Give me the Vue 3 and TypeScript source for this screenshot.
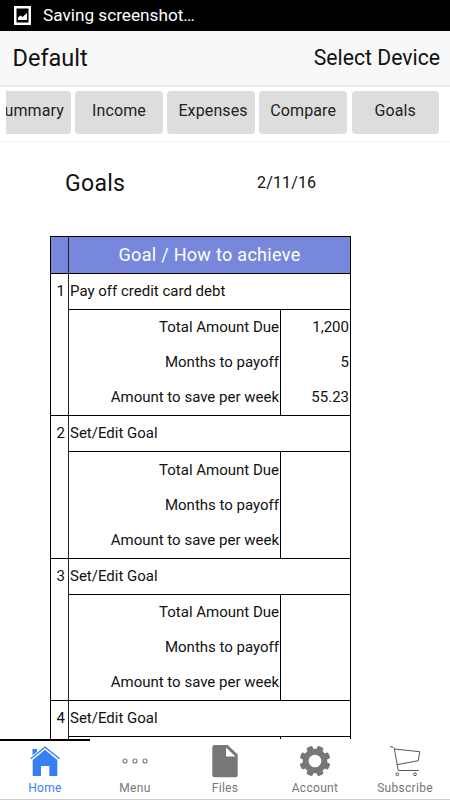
<script setup lang="ts">
interface Goal {
  title: string
  rows: { label: string; value: string }[]
}

const sections: string[] = ['Summary', 'Income', 'Expenses', 'Compare', 'Goals']

const detailRows = (total = '', months = '', weekly = '') => [
  { label: 'Total Amount Due', value: total },
  { label: 'Months to payoff', value: months },
  { label: 'Amount to save per week', value: weekly },
]

const goals: Goal[] = [
  { title: 'Pay off credit card debt', rows: detailRows('1,200', '5', '55.23') },
  { title: 'Set/Edit Goal', rows: detailRows() },
  { title: 'Set/Edit Goal', rows: detailRows() },
  { title: 'Set/Edit Goal', rows: [] },
]
</script>

<template>
  <div class="screen">
    <div class="status">
      <svg class="status-icon" viewBox="0 0 17 19" width="17" height="19">
        <path d="M1.25 1.25h14.5v16.5H1.25z" fill="none" stroke="#fff" stroke-width="2.5" />
        <path d="M4 14v-2.500l2.500-2 2 1.500L13 7v7z" fill="#fff" />
      </svg>
      <span class="status-text">Saving screenshot…</span>
    </div>
    <header class="header">
      <span class="name">Default</span>
      <span class="device">Select Device</span>
    </header>
    <div class="sections">
      <button v-for="s in sections" :key="s" class="section" type="button">{{ s }}</button>
    </div>
    <main class="content">
      <div class="heading">
        <h1>Goals</h1>
        <span class="date">2/11/16</span>
      </div>
      <div class="sheet">
        <div class="sheet-head">
          <span class="num"></span>
          <span class="head-label"><b>Goal / How to achieve</b></span>
        </div>
        <div v-for="(g, i) in goals" :key="i" class="goal">
          <div class="num">{{ i + 1 }}</div>
          <div class="body">
            <div class="title"><span>{{ g.title }}</span></div>
            <div class="details">
              <div class="labels">
                <span v-for="r in g.rows" :key="r.label">{{ r.label }}</span>
              </div>
              <div class="values">
                <span v-for="r in g.rows" :key="r.label">{{ r.value }}</span>
              </div>
            </div>
          </div>
        </div>
      </div>
    </main>
    <nav class="tabs">
      <div class="tab active">
        <svg viewBox="0 0 36 36" width="36" height="36">
          <path d="M5.500 6H10v3.500l-4.500 4z" fill="#387ef5" />
          <path d="M5.700 17 18 6.800 30.300 17v16H22.300V23H14v10H5.700z" fill="#387ef5" />
          <path d="M3.700 15.700 18 4.200l14.700 11.500" fill="none" stroke="#fff" stroke-width="3" />
          <path d="M3.700 15.700 18 4.200l14.700 11.500" fill="none" stroke="#387ef5" stroke-width="1.300" />
        </svg>
        <span>Home</span>
      </div>
      <div class="tab">
        <svg viewBox="0 0 36 36" width="36" height="36" fill="none" stroke="#777" stroke-width="1.100">
          <circle cx="8" cy="18" r="2" /><circle cx="18" cy="18" r="2" /><circle cx="28" cy="18" r="2" />
        </svg>
        <span>Menu</span>
      </div>
      <div class="tab">
        <svg viewBox="0 0 36 36" width="36" height="36">
          <path fill-rule="evenodd" d="M8 2h12.700l10 9.500v20.500q0 2.300-2.300 2.300H7.700q-2.400 0-2.400-2.300V4.500Q5.300 2 8 2zM19 4.500v9h9.500z" fill="#777" />
        </svg>
        <span>Files</span>
      </div>
      <div class="tab">
        <svg viewBox="0 0 36 36" width="36" height="36">
          <g fill="#777">
            <rect v-for="n in 8" :key="n" x="14.800" y="2.600" width="6.400" height="8" rx="1.600" :transform="`rotate(${n * 45 + 22.5} 18 18)`" />
          </g>
          <circle cx="18" cy="18" r="9.300" fill="none" stroke="#777" stroke-width="6" />
        </svg>
        <span>Account</span>
      </div>
      <div class="tab">
        <svg viewBox="0 0 36 36" width="36" height="36" fill="none" stroke="#555" stroke-width="1">
          <path d="M3 3.700 6 4.200l1.300 1.300 4 22h20.400M7.300 6l25.400 2.700-1.400 9L9.900 21.700" />
          <circle cx="10.300" cy="31.300" r="1.400" /><circle cx="28" cy="31.300" r="1.400" />
        </svg>
        <span>Subscribe</span>
      </div>
    </nav>
  </div>
</template>

<style>
body {
  margin: 0;
  overflow: hidden;
}
</style>

<style scoped>
.screen {
  box-sizing: border-box;
  width: 450px;
  height: 800px;
  display: flex;
  flex-direction: column;
  overflow: hidden;
  background: #fff;
  color: #111;
  font-family: Roboto, sans-serif;
}
.screen * {
  box-sizing: border-box;
}
.status {
  flex: none;
  height: 31px;
  display: flex;
  padding: 6px 14px 0;
  gap: 12px;
  background: #000;
  color: #fff;
}
.status-text {
  font-size: 17.200px;
  line-height: 18px;
}
.header {
  flex: none;
  height: 56px;
  display: flex;
  justify-content: space-between;
  padding: 0 10px 0 12.500px;
  line-height: 54px;
  background: #f8f8f8;
  border-bottom: 2px solid #ececec;
}
.name {
  font-size: 23.500px;
  line-height: 55px;
}
.device {
  font-size: 21.200px;
}
.sections {
  flex: none;
  display: flex;
  justify-content: flex-end;
  gap: 4.600px;
  height: 54px;
  padding: 4px 11px 0 0;
  margin-left: 6px;
  overflow: hidden;
}
.section {
  flex: none;
  width: 87.500px;
  height: 43px;
  padding: 0 0 4px;
  border: 0;
  border-radius: 4px;
  background: #ddd;
  color: #222;
  font: 16px Roboto, sans-serif;
  letter-spacing: 0.120px;
}
.section:nth-child(1) {
  padding-left: 5px;
}
.section:nth-child(3) {
  padding-left: 4px;
}
.content {
  flex: 1;
  min-height: 0;
  overflow: hidden;
  border-top: 1px solid #f5f5f5;
}
.heading {
  display: flex;
  height: 94px;
  padding: 28px 0 0 65px;
  align-items: flex-start;
}
h1 {
  width: 192px;
  margin: 0;
  font-size: 23px;
  line-height: 28px;
  font-weight: 400;
  letter-spacing: 0.300px;
}
.date {
  font-size: 16px;
  line-height: 26px;
  letter-spacing: 0.150px;
}
.sheet {
  width: 301px;
  margin-left: 50px;
  border: 1px solid #000;
  font-size: 15px;
}
.sheet-head {
  display: flex;
  height: 36px;
  background: #7788dc;
  color: #fff;
}
.num {
  flex: none;
  width: 18px;
  padding-right: 3px;
  border-right: 1px solid #222;
  line-height: 35px;
  text-align: right;
}
.head-label {
  flex: 1;
  line-height: 35px;
  text-align: center;
}
.head-label b {
  font-size: 18px;
  font-weight: 400;
  letter-spacing: 0.300px;
}
.goal {
  display: flex;
  height: 142px;
  border-top: 1px solid #000;
}
.goal:nth-child(3) {
  height: 143px;
}
.body {
  flex: 1;
  display: flex;
  flex-direction: column;
}
.title {
  height: 35px;
  padding-left: 1px;
  line-height: 35px;
}
.details {
  flex: 1;
  display: flex;
  border-top: 1px solid #000;
}
.labels,
.values {
  display: flex;
  flex-direction: column;
  padding-right: 1px;
  text-align: right;
  line-height: 35px;
}
.labels {
  width: 211px;
}
.values {
  flex: 1;
  border-left: 1px solid #000;
}
.goal:nth-child(3) .labels,
.goal:nth-child(3) .values {
  padding-top: 1px;
}
.labels span,
.values span {
  height: 35px;
}
.tabs {
  flex: none;
  height: 61px;
  display: flex;
  background: #fff;
  border-bottom: 1px solid #ccc;
}
.tab {
  width: 90px;
  display: flex;
  flex-direction: column;
  align-items: center;
  padding-top: 2px;
  border-top: 2px solid transparent;
  color: #777;
}
.tab svg {
  flex: none;
  margin-bottom: 2px;
}
.tab span {
  font-size: 12px;
  line-height: 14px;
  letter-spacing: 0.300px;
}
.tab.active {
  border-top-color: #000;
  color: #387ef5;
}
</style>
